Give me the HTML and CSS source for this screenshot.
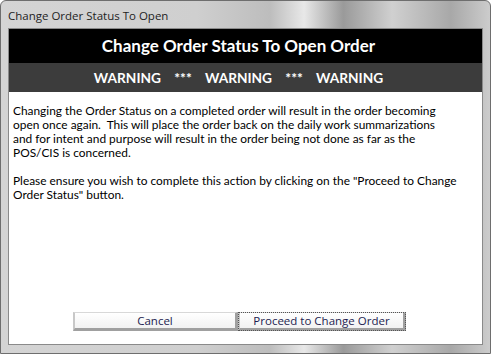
FILE: index.html
```html
<html lang="en"><head>
    <meta charset="UTF-8">
    <title>Change Order Status To Open</title>
    <link rel="stylesheet" href="styles.css">
</head>
<body>
    <div class="janela">
        <div class="barra-titulo">Change Order Status To Open</div>
        <div class="area">
            <div class="cabecalho">Change Order Status To Open Order</div>
            <div class="aviso">WARNING    ***    WARNING    ***    WARNING</div>
            <div class="corpo">
                <p>Changing the Order Status on a completed order will result in the order becoming open once again.&nbsp; This will place the order back on the daily work summarizations and for intent and purpose will result in the order being not done as far as the POS/CIS is concerned.</p>
                <p class="confirma">Please ensure you wish to complete this action by clicking on the "Proceed to Change Order Status" button.</p>
                <div class="botoes">
                    <button class="botao">Cancel</button>
                    <button class="botao foco">Proceed to Change Order</button>
                </div>
            </div>
        </div>
    </div>
</body>
</html>
```

FILE: styles.css
```css
body {
    margin: 0;
    padding: 0;
    background: #ffffff;
}

/*moldura da janela*/
.janela {
    width: 491px;
    height: 354px;
    box-sizing: border-box;
    border: 1px solid #6e6e6e;
    border-radius: 6px 6px 0 0;
    background: linear-gradient(90deg, #d4d4d4 0%, #cfcfcf 40%, #bdbdbd 55%, #e8e8e8 62%, #9a9a9a 70%, #d0d0d0 80%, #a8a8a8 92%, #cccccc 100%);
    display: flex;
    flex-direction: column;
    padding: 0 7px 8px 7px;
}

.barra-titulo {
    height: 27px;
    font-family: "Open Sans", sans-serif;
    font-size: 11.5px;
    color: #1e1e1e;
    line-height: 30px;
    white-space: nowrap;
}

/*area branca do conteudo*/
.area {
    flex: 1;
    display: flex;
    flex-direction: column;
    background: #ffffff;
    border: 1px solid #8a8a8a;
}

.cabecalho {
    height: 34px;
    background: #000000;
    color: #ffffff;
    font-family: Lato, sans-serif;
    font-weight: bold;
    font-size: 17px;
    line-height: 34px;
    text-align: center;
    padding-right: 14px;
}

.aviso {
    height: 29px;
    background: #3c3c3c;
    color: #ffffff;
    font-family: Lato, sans-serif;
    font-weight: bold;
    font-size: 13.7px;
    line-height: 29px;
    text-align: center;
    white-space: pre;
    padding-right: 14px;
}

.corpo {
    flex: 1;
    display: flex;
    flex-direction: column;
    padding: 12px 0 13px 4px;
    font-family: Lato, sans-serif;
    font-size: 11.9px;
    line-height: 14px;
    color: #000000;
}

.corpo p {
    margin: 0 0 14px 0;
    width: 436px;
}

.corpo .confirma {
    width: 462px;
}

.botoes {
    margin-top: auto;
    display: flex;
    padding-left: 60px;
}

.botao {
    height: 19px;
    width: 165px;
    padding: 0;
    font-family: "Open Sans", sans-serif;
    font-size: 11.5px;
    color: #1c1c50;
    background: linear-gradient(#ffffff, #f2f2f2);
    border: 1px solid #d8d8d8;
    border-right: 3px solid #a0a0a0;
    border-bottom: 3px solid #a0a0a0;
    border-left: 2px solid #c8c8c8;
    box-sizing: border-box;
}

.foco {
    width: 168px;
    outline: 1px dotted #555555;
    outline-offset: -1px;
}
```
